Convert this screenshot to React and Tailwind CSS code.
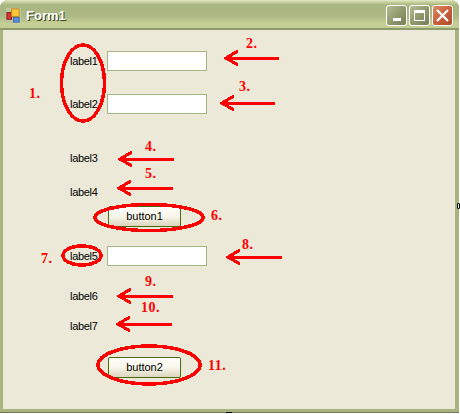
const font = "font-['Liberation_Sans',Arial,sans-serif]";

function Field() {
  return <div className="w-[100px] h-[20px] bg-white border border-[#a5b585]" />;
}

function Label({ text }) {
  return <div className="w-[38px] pl-[1px] h-[20px] leading-[20px] text-[11px] text-black tracking-[-0.3px]">{text}</div>;
}

function FormButton({ text }) {
  return (
    <div className="ml-[39px] w-[73px] h-[21px] flex items-center justify-center text-[11px] text-black rounded-[2px] border border-[#4a6a10] bg-gradient-to-b from-[#fffffb] via-[#f8f6ea] to-[#dcd6bd]">
      {text}
    </div>
  );
}

function WinButton({ close, children }) {
  return (
    <div className={close
      ? "w-[21px] h-[21px] rounded-[3px] border border-white flex items-center justify-center bg-gradient-to-br from-[#d98a68] via-[#c9603c] to-[#b04a28]"
      : "w-[21px] h-[21px] rounded-[3px] border border-white flex items-center justify-center bg-gradient-to-br from-[#b3bd93] via-[#8f9a6e] to-[#74805a]"}>
      {children}
    </div>
  );
}

const arrows = [
  [225, 58, 279], [221, 103, 275], [119, 159, 174], [118, 188, 173],
  [227, 257, 282], [118, 296, 173], [117, 324, 172],
];

const notes = [
  ["1.", 29, 86], ["2.", 246, 36], ["3.", 239, 79], ["4.", 145, 139],
  ["5.", 145, 166], ["6.", 211, 208], ["7.", 41, 251], ["8.", 242, 237],
  ["9.", 145, 274], ["10.", 141, 300], ["11.", 208, 358],
];

function Notes() {
  return (
    <>
      <svg className="absolute left-0 top-0" width="460" height="414" fill="none" stroke="#ff0000" strokeWidth="3" shapeRendering="crispEdges">
        <g strokeWidth="3.5">
          <ellipse cx="83" cy="83" rx="21.5" ry="38" />
          <ellipse cx="149" cy="217.5" rx="54" ry="13" />
          <ellipse cx="82" cy="255.5" rx="19" ry="9.5" />
          <ellipse cx="149" cy="365" rx="51" ry="19" />
        </g>
        {arrows.map(([tip, y, tail]) => (
          <g key={tip + "-" + y}>
            <path d={`M${tip} ${y}H${tail}`} />
            <path d={`M${tip + 13} ${y - 7}L${tip + 1} ${y}L${tip + 13} ${y + 7}`} />
          </g>
        ))}
      </svg>
      {notes.map(([t, x, y]) => (
        <span
          key={t}
          style={{ left: x, top: y }}
          className="absolute font-['Liberation_Serif',serif] font-bold text-[14px] leading-[16px] tracking-[0.5px] text-[#ff0000]"
        >
          {t}
        </span>
      ))}
      {/* bits of the neighbouring window showing at the edges */}
      <div className="absolute left-[457px] top-[203px] w-[3px] h-[6px] rounded-[1px] bg-[#dff0f5] border border-black" />
      <div className="absolute left-[226px] top-[412px] w-[6px] h-[2px] bg-white border-t border-black" />
    </>
  );
}

export default function App() {
  return (
    <div className={`relative w-[460px] h-[414px] bg-white overflow-hidden ${font}`}>
      <div className="w-[459px] h-[413px] rounded-t-[8px] flex flex-col bg-[#a7b47f] border-b border-[#6f7a50]">
        {/* title bar */}
        <div className="h-[30px] shrink-0 rounded-t-[8px] flex items-center pl-[6px] pr-[6px] bg-[linear-gradient(to_bottom,#e4ebc6_0px,#c8d19f_2px,#a9b680_5px,#adb985_16px,#c6d096_24px,#c4ce94_28px)] border-b-2 border-[#8e9a6c]">
          <svg width="15" height="15" viewBox="0 0 16 16" className="mr-[5px] mt-[3px]">
            <rect x="0" y="0" width="16" height="16" fill="#bcc59c" />
            <rect x="1" y="5" width="5" height="7" fill="#d33" stroke="#811" />
            <rect x="6" y="1" width="8" height="8" fill="#f8c838" stroke="#c08a18" />
            <rect x="8" y="10" width="6" height="5" fill="#5a90e0" stroke="#3a68b0" />
          </svg>
          <span className="mt-[3px] text-[13px] font-bold text-white [text-shadow:1px_1px_0_#3c4520]">Form1</span>
          <div className="ml-auto flex gap-[2px] mt-[2px]">
            <WinButton>
              <div className="w-[8px] h-[3px] bg-white mt-[9px]" />
            </WinButton>
            <WinButton>
              <div className="w-[11px] h-[11px] border border-white border-t-[3px]" />
            </WinButton>
            <WinButton close>
              <svg width="13" height="13" viewBox="0 0 13 13" stroke="#fff" strokeWidth="2.2">
                <path d="M1 1L12 12M12 1L1 12" />
              </svg>
            </WinButton>
          </div>
        </div>
        {/* client area */}
        <div className="flex-1 ml-[3px] mr-[4px] mb-[3px] pl-[66px] pt-[21px] bg-[#ece9d8] flex flex-col items-start">
          <div className="flex"><Label text="label1" /><Field /></div>
          <div className="flex mt-[23px]"><Label text="label2" /><Field /></div>
          <div className="mt-[34px]"><Label text="label3" /></div>
          <div className="mt-[14px]"><Label text="label4" /></div>
          <div className="mt-[4px]"><FormButton text="button1" /></div>
          <div className="flex mt-[19px]"><Label text="label5" /><Field /></div>
          <div className="mt-[20px]"><Label text="label6" /></div>
          <div className="mt-[10px]"><Label text="label7" /></div>
          <div className="mt-[21px]"><FormButton text="button2" /></div>
        </div>
      </div>
      <Notes />
    </div>
  );
}
